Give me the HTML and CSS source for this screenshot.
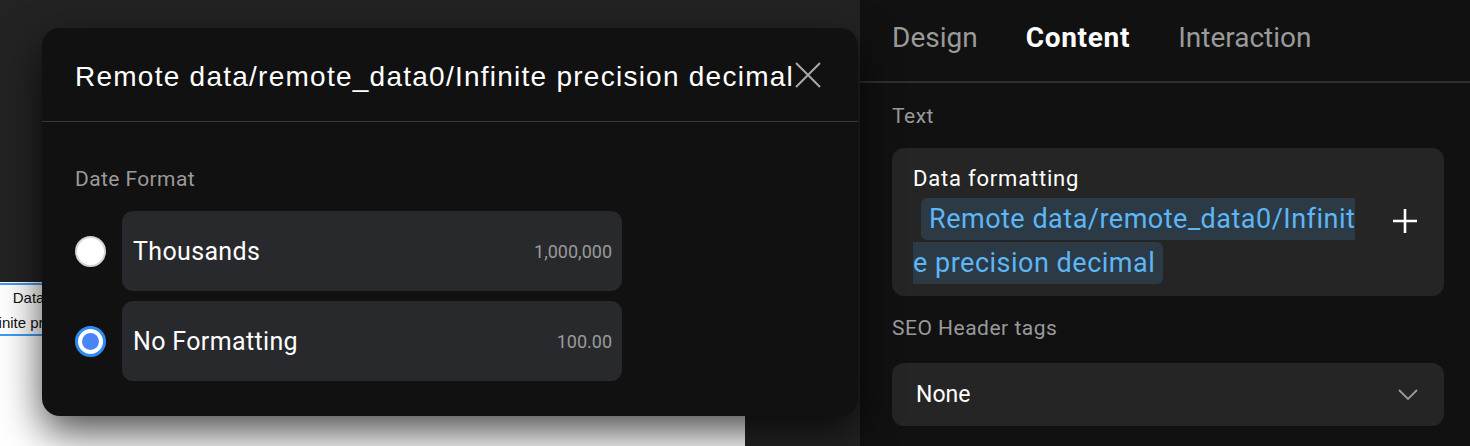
FILE: index.html
```html
<!DOCTYPE html>
<html lang="en">
<head>
<meta charset="utf-8">
<title>Data formatting</title>
<link rel="stylesheet" href="styles.css">
</head>
<body>
<div class="app">
  <div class="workspace">
    <div class="canvas">
      <div class="canvas-el">Data formatting<br>Infinite precision decimal</div>
    </div>
    <div class="modal">
      <div class="modal-header">
        <div class="modal-title">Remote data/remote_data0/Infinite precision decimal</div>
        <svg class="close-icon" width="26" height="26" viewBox="0 0 26 26" aria-hidden="true">
          <path d="M1 1 L25 25 M25 1 L1 25" stroke="#a8a8a8" stroke-width="2" fill="none"/>
        </svg>
      </div>
      <div class="modal-body">
        <div class="field-label">Date Format</div>
        <div class="options">
          <div class="option">
            <span class="radio"></span>
            <div class="option-card">
              <span class="option-name">Thousands</span>
              <span class="option-example">1,000,000</span>
            </div>
          </div>
          <div class="option">
            <span class="radio radio-checked"><span class="radio-dot"></span></span>
            <div class="option-card">
              <span class="option-name">No Formatting</span>
              <span class="option-example">100.00</span>
            </div>
          </div>
        </div>
      </div>
    </div>
  </div>
  <aside class="panel">
    <nav class="tabs">
      <span class="tab">Design</span>
      <span class="tab tab-active">Content</span>
      <span class="tab">Interaction</span>
    </nav>
    <div class="panel-body">
      <div class="panel-label">Text</div>
      <div class="text-box">
        <div class="text-box-main">
          <div class="text-box-title">Data formatting</div>
          <div class="chip-line"><span class="chip">Remote data/remote_data0/Infinite precision decimal</span></div>
        </div>
        <svg class="plus-icon" width="26" height="26" viewBox="0 0 26 26" aria-hidden="true">
          <path d="M13 1 V25 M1 13 H25" stroke="#ffffff" stroke-width="2.6" fill="none"/>
        </svg>
      </div>
      <div class="panel-label panel-label-seo">SEO Header tags</div>
      <div class="select">
        <span class="select-value">None</span>
        <svg class="chevron" width="20" height="11" viewBox="0 0 20 11" aria-hidden="true">
          <path d="M1 1 L10 10 L19 1" stroke="#9a9a9a" stroke-width="1.8" fill="none"/>
        </svg>
      </div>
    </div>
  </aside>
</div>
</body>
</html>
```

FILE: styles.css
```css
* { box-sizing: border-box; }

html, body {
  margin: 0;
  padding: 0;
  background: #111111;
}

body {
  width: 1470px;
  height: 446px;
  overflow: hidden;
  font-family: Roboto, "Noto Sans", Arial, sans-serif;
}

.app {
  display: flex;
  width: 1470px;
  height: 446px;
}

/* ---------- workspace ---------- */
.workspace {
  position: relative;
  width: 860px;
  height: 446px;
  background: #232323;
  display: flex;
  flex-direction: column;
  justify-content: flex-end;
}

.canvas {
  position: relative;
  width: 745px;
  height: 164px;
  background: #ffffff;
  overflow: hidden;
}

.canvas-el {
  position: absolute;
  left: -36px;
  top: 1px;
  width: 200px;
  height: 53px;
  border-top: 2px solid #3d9cf5;
  border-bottom: 2px solid #3d9cf5;
  background: #ffffff;
  text-align: center;
  font-family: "Liberation Sans", Arial, sans-serif;
  font-size: 15px;
  line-height: 25px;
  color: #111111;
}

.modal {
  position: absolute;
  left: 42px;
  top: 28px;
  width: 816px;
  height: 388px;
  background: #111111;
  border-radius: 18px;
  box-shadow: 0 16px 40px rgba(0, 0, 0, 0.7);
}

.modal-header {
  display: flex;
  align-items: center;
  height: 94px;
  padding: 4px 37px 0 33px;
  border-bottom: 1px solid #383838;
}

.modal-title {
  flex: 1;
  white-space: nowrap;
  font-family: "Liberation Sans", Arial, sans-serif;
  font-size: 28px;
  letter-spacing: 1.25px;
  color: #ffffff;
}

.close-icon {
  flex: none;
  display: block;
  margin-top: -4px;
}

.modal-body {
  padding: 0 33px;
}

.field-label {
  margin-top: 45px;
  height: 24px;
  line-height: 24px;
  font-size: 21px;
  letter-spacing: 0.4px;
  color: #9a9a9a;
}

.options {
  margin-top: 20px;
  display: flex;
  flex-direction: column;
  gap: 10px;
}

.option {
  display: flex;
  align-items: center;
  gap: 16px;
}

.radio {
  flex: none;
  width: 31px;
  height: 31px;
  border-radius: 50%;
  background: #ffffff;
  border: 2px solid #d4d4d4;
  display: flex;
  align-items: center;
  justify-content: center;
}

.radio-checked {
  border: 3px solid #2d8cf0;
}

.radio-dot {
  width: 17px;
  height: 17px;
  border-radius: 50%;
  background: #4a85f6;
}

.option-card {
  width: 500px;
  height: 80px;
  border-radius: 11px;
  background: #28292c;
  display: flex;
  align-items: center;
  justify-content: space-between;
  padding: 0 10px 0 11px;
}

.option-name {
  font-size: 25px;
  letter-spacing: 0.35px;
  color: #ffffff;
}

.option-example {
  font-size: 18px;
  color: #9a9a9a;
}

/* ---------- right panel ---------- */
.panel {
  width: 610px;
  height: 446px;
  background: #111111;
}

.tabs {
  height: 83px;
  display: flex;
  align-items: flex-start;
  gap: 48px;
  padding: 19px 0 0 32px;
  border-bottom: 2px solid #2f2f2f;
}

.tab {
  font-size: 28px;
  line-height: 38px;
  color: #9a9a9a;
}

.tab-active {
  color: #ffffff;
  font-weight: 700;
  letter-spacing: 0.7px;
}

.panel-body {
  padding: 0 26px 0 32px;
}

.panel-label {
  margin-top: 21px;
  height: 24px;
  line-height: 24px;
  font-size: 21px;
  letter-spacing: 0.5px;
  color: #9a9a9a;
}

.panel-label-seo {
  margin-top: 20px;
}

.text-box {
  margin-top: 20px;
  height: 148px;
  border-radius: 12px;
  background: #252525;
  display: flex;
  align-items: center;
  padding: 0 26px 0 21px;
}

.text-box-main {
  width: 446px;
  padding-top: 6px;
}

.text-box-title {
  font-size: 22px;
  line-height: 26px;
  letter-spacing: 0.8px;
  color: #ffffff;
  margin-bottom: 5px;
}

.chip-line {
  font-size: 27px;
  line-height: 44px;
  letter-spacing: 0.5px;
  word-break: break-all;
}

.chip {
  margin-left: 8px;
  padding: 5px 8px 5px 8px;
  border-radius: 6px;
  background: #2c3a46;
  color: #5db6f6;
  -webkit-box-decoration-break: slice;
  box-decoration-break: slice;
}

.plus-icon {
  display: block;
  margin-left: auto;
  margin-top: -2px;
}

.select {
  margin-top: 23px;
  height: 63px;
  border-radius: 12px;
  background: #252525;
  display: flex;
  align-items: center;
  justify-content: space-between;
  padding: 0 26px 0 24px;
}

.select-value {
  font-size: 23px;
  color: #ffffff;
}

.chevron {
  display: block;
}
```
